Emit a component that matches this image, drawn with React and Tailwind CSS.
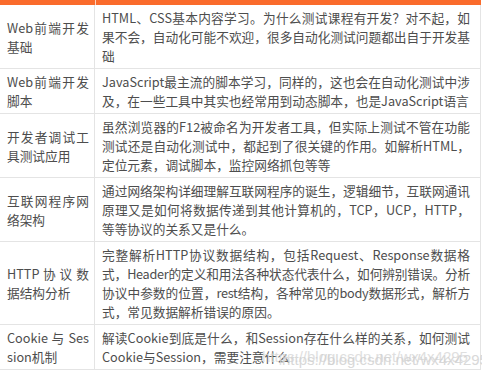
import React from "react";

const rows = [
  ["Web前端开发基础", "HTML、CSS基本内容学习。为什么测试课程有开发？对不起，如果不会，自动化可能不欢迎，很多自动化测试问题都出自于开发基础"],
  ["Web前端开发脚本", "JavaScript最主流的脚本学习，同样的，这也会在自动化测试中涉及，在一些工具中其实也经常用到动态脚本，也是JavaScript语言"],
  ["开发者调试工具测试应用", "虽然浏览器的F12被命名为开发者工具，但实际上测试不管在功能测试还是自动化测试中，都起到了很关键的作用。如解析HTML，定位元素，调试脚本，监控网络抓包等等"],
  ["互联网程序网络架构", "通过网络架构详细理解互联网程序的诞生，逻辑细节，互联网通讯原理又是如何将数据传递到其他计算机的，TCP，UCP，HTTP，等等协议的关系又是什么。"],
  [
    "HTTP 协 议 数据结构分析",
    <>
      完整解析HTTP协议数据结构，包括Request、Response数据格<span className="tracking-[-0.3px]">式，Header的定义和用法各种状态代表什么，如何辨别错误。分析协议中参数的位置，rest结构，各种常见的body数据形式，解析方</span>式，常见数据解析错误的原因。
    </>,
  ],
  ["Cookie 与 Session机制", "解读Cookie到底是什么，和Session存在什么样的关系，如何测试Cookie与Session，需要注意什么"],
];

export default function App() {
  return (
    <div className="relative w-[482px] h-[375px] bg-white overflow-hidden text-[12.7px] leading-[19px] text-[#4d4d4d]" style={{ fontFamily: '"Noto Sans CJK SC", "Noto Sans", sans-serif' }}>
      <div className="flex h-[5px] w-[481px]">
        <div className="w-[95px] bg-[#fa6b2c]"></div>
        <div className="w-px bg-[#fbd3c0]"></div>
        <div className="flex-1 bg-[#fa6b2c]"></div>
      </div>
      <div className="w-[481px] border-r border-[#e4e4e4]">
        {rows.map(([a, b], i) => (
          <div key={i} className="flex border-b border-[#e4e4e4]">
            <div className="w-[95px] shrink-0 border-r border-[#e4e4e4] pl-[7px] pr-[5px] py-[3px] flex items-center">
              <div className="w-full text-justify break-all">{a}</div>
            </div>
            <div className="flex-1 pl-[7px] pr-[10px] py-[3px] text-justify break-all">{b}</div>
          </div>
        ))}
      </div>
      <div className="absolute left-[262px] top-[347px] text-[15px] text-[#d8d8d8] opacity-80 whitespace-nowrap" style={{ fontFamily: '"Liberation Sans", sans-serif' }}>https://blog.csdn.net/wx4x4295</div>
      <div className="absolute left-[282px] top-[350px] text-[15px] text-[#d0d0d0] opacity-80 whitespace-nowrap" style={{ fontFamily: '"Liberation Sans", sans-serif' }}>https://blog.csdn.net/wx4x4295</div>
    </div>
  );
}
